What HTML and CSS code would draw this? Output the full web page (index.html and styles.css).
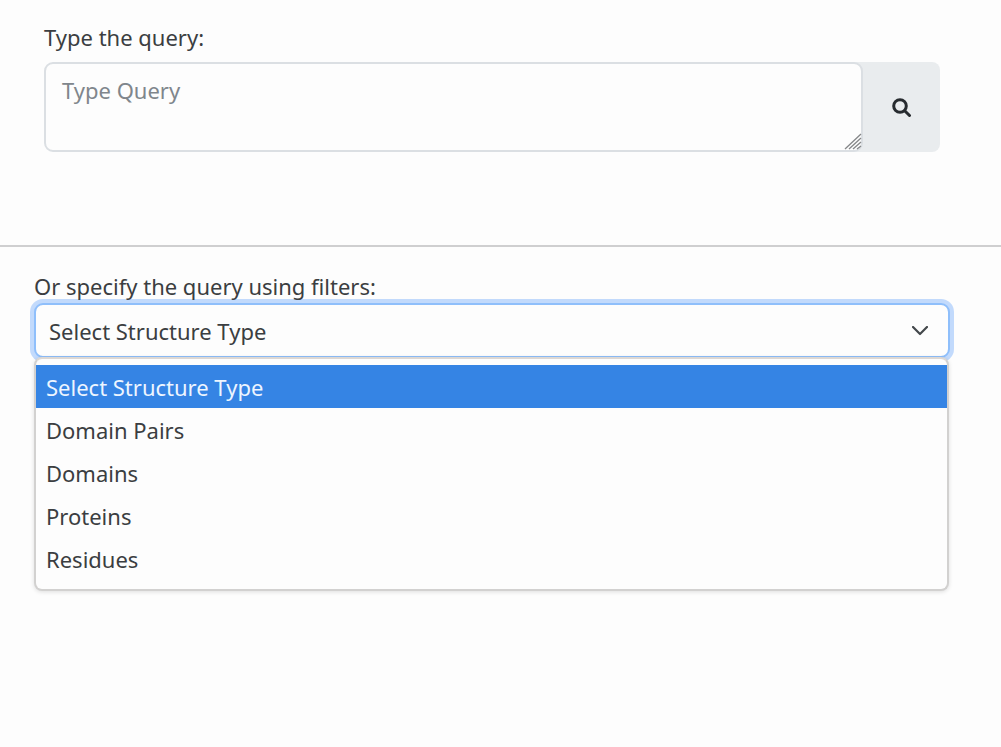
FILE: index.html
```
<!DOCTYPE html>
<html lang="en">
<head>
<meta charset="utf-8">
<meta name="viewport" content="width=device-width, initial-scale=1">
<title>Query</title>
<link rel="stylesheet" href="styles.css">
</head>
<body>
<main>
  <form class="query">
    <label class="label" for="query">Type the query:</label>
    <div class="query-group">
      <div class="query-field">
        <textarea class="query-input" id="query" placeholder="Type Query"></textarea>
        <svg class="grip" viewBox="0 0 18 17" aria-hidden="true">
          <path d="M1 16 17 1M5 16 17 5M9 16 17 9M13 16 17 13"/>
        </svg>
      </div>
      <button class="query-button" type="submit" aria-label="Search">
        <svg class="search-icon" viewBox="0 0 20 20" aria-hidden="true">
          <circle cx="8" cy="9" r="6.3"/>
          <path d="M12.7 13.7 17.5 18.5"/>
        </svg>
      </button>
    </div>
  </form>
  <section class="filters">
    <label class="label" for="structure">Or specify the query using filters:</label>
    <div class="picker">
      <select class="picker-select" id="structure">
        <option>Select Structure Type</option>
        <option>Domain Pairs</option>
        <option>Domains</option>
        <option>Proteins</option>
        <option>Residues</option>
      </select>
      <svg class="chevron" viewBox="0 0 16 10" aria-hidden="true"><path d="M1 1 8 8 15 1"/></svg>
      <ul class="menu" role="listbox" aria-label="Structure type">
        <li class="menu-item menu-item-active" role="option" aria-selected="true">Select Structure Type</li>
        <li class="menu-item" role="option" aria-selected="false">Domain Pairs</li>
        <li class="menu-item" role="option" aria-selected="false">Domains</li>
        <li class="menu-item" role="option" aria-selected="false">Proteins</li>
        <li class="menu-item" role="option" aria-selected="false">Residues</li>
      </ul>
    </div>
  </section>
</main>
</body>
</html>
```
FILE: styles.css
```
* {
  box-sizing: border-box;
}

body {
  min-height: 100vh;
  margin: 0;
  background: #fdfdfd;
  color: #3b3e41;
  font: 22px/32px "Noto Sans", "Open Sans", sans-serif;
}

textarea,
select,
button {
  margin: 0;
  color: inherit;
  font: inherit;
}

.label {
  position: relative;
  z-index: 1;
  display: block;
}

.query {
  padding: 21px 61px 93px 44px;
  border-bottom: 2px solid #cfcfd0;
}

.query .label {
  margin-bottom: 9px;
}

.query-group {
  display: flex;
}

.query-field {
  position: relative;
  display: flex;
  flex: 1;
  background: linear-gradient(to right, transparent 50%, #e9ecee 50%);
}

.query-input {
  flex: 1;
  min-width: 0;
  height: 90px;
  padding: 10px 16px;
  border: 2px solid #dbdfe3;
  border-radius: 9px;
  background: #fdfdfd;
  outline: 0;
  resize: none;
}

.query-input::placeholder {
  color: #80868c;
  opacity: 1;
}

.grip {
  position: absolute;
  right: 1px;
  bottom: 2px;
  width: 18px;
  height: 17px;
  fill: none;
  stroke: #858789;
  stroke-width: 1.3;
}

.query-button {
  display: flex;
  align-items: center;
  justify-content: center;
  width: 77px;
  padding: 0;
  border: 0;
  border-radius: 0 8px 8px 0;
  background: #e9ecee;
}

.search-icon {
  width: 20px;
  height: 20px;
  fill: none;
  stroke: #272b2f;
  stroke-width: 3;
  stroke-linecap: round;
}

.filters {
  padding: 23px 51px 0 34px;
}

.filters .label {
  margin-bottom: 1px;
}

.picker {
  position: relative;
}

.picker-select {
  display: block;
  width: 100%;
  height: 55px;
  padding: 0 48px 0 13px;
  border: 2px solid #8fbffb;
  border-radius: 9px;
  background: #fdfdfd;
  outline: 0;
  box-shadow: 0 0 0 4px #c2dafc;
  appearance: none;
}

.chevron {
  position: absolute;
  top: 23px;
  right: 22px;
  width: 16px;
  height: 10px;
  fill: none;
  stroke: #44484c;
  stroke-width: 2.2;
  stroke-linecap: round;
  stroke-linejoin: round;
  pointer-events: none;
}

.menu {
  position: absolute;
  top: 54px;
  right: 1px;
  left: 0;
  margin: 0;
  padding: 6px 0 9px;
  border: 2px solid #d2d1d0;
  border-top-color: #ddd8d4;
  border-radius: 8px;
  background: #fdfdfd;
  box-shadow: 0 1px 4px #00000020;
  list-style: none;
}

.menu-item {
  padding: 6px 10px 5px;
}

.menu-item-active {
  background: #3584e4;
  color: #edf5ff;
}
```
